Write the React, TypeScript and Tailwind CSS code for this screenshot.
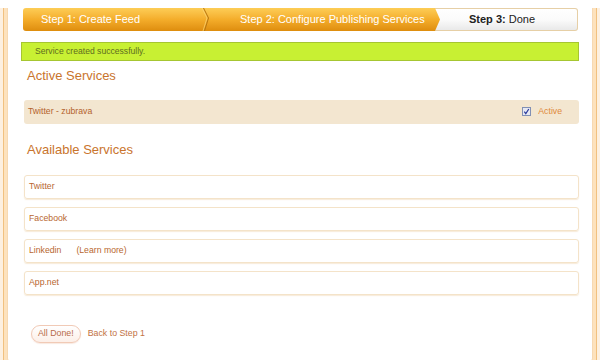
import { ReactNode } from 'react'

const font = "font-['Liberation_Sans',Arial,sans-serif]"

function Chevron() {
  return (
    <svg className="absolute left-[177px] top-0" width="10" height="23" viewBox="0 0 10 23">
      <path d="M2 0 L7 10 L3 23" fill="none" stroke="#fbd77a" strokeWidth="1" opacity="0.7" />
      <path d="M3.5 0 L8.5 10 L4.5 23" fill="none" stroke="#b87610" strokeWidth="1" />
    </svg>
  )
}

function StepBar() {
  return (
    <div className="flex h-[23px] ml-[15px] mr-[14px] mt-[8px] text-[11px]">
      <div className="relative flex items-center w-[412px] rounded-l-[3px] bg-linear-to-b from-[#fdcd55] via-[#f4ad2a] to-[#de8d0c] text-white">
        <span className="pl-[18px] w-[181px]">Step 1: Create Feed</span>
        <Chevron />
        <span className="pl-[36px]">Step 2: Configure Publishing Services</span>
      </div>
      <div className="relative flex-1 flex items-center rounded-r-[3px] border border-l-0 border-[#e6cfa6] bg-linear-to-b from-white via-[#fbfbfb] to-[#e9e9e9] text-[#222]">
        <svg className="absolute left-0 top-[-1px]" width="6" height="23" viewBox="0 0 6 23">
          <defs>
            <linearGradient id="og" x1="0" y1="0" x2="0" y2="1">
              <stop offset="0" stopColor="#fdcd55" />
              <stop offset="0.5" stopColor="#f4ad2a" />
              <stop offset="1" stopColor="#de8d0c" />
            </linearGradient>
          </defs>
          <path d="M0 0 L5 11.5 L0 23 Z" fill="url(#og)" />
        </svg>
        <span className="pl-[34px]">
          <b>Step 3:</b> Done
        </span>
      </div>
    </div>
  )
}

function Row({ children, active }: { children: ReactNode; active?: boolean }) {
  return (
    <div
      className={
        active
          ? 'flex items-center h-[24px] rounded-[3px] bg-[#f3e6d0] px-[4px] text-[8.7px] text-[#b4632c]'
          : 'flex items-center h-[24px] rounded-[3px] border border-[#f4e3c9] shadow-[0_1px_1px_rgba(240,215,180,0.5)] px-[4px] text-[8.7px] text-[#b8672f]'
      }
    >
      {children}
    </div>
  )
}

function CheckBox() {
  return (
    <svg width="9" height="9" viewBox="0 0 9 9">
      <rect x="0.5" y="0.5" width="8" height="8" fill="#e6e8f2" stroke="#8190b4" />
      <path d="M2.3 4.6 L3.8 6.6 L6.8 2" fill="none" stroke="#2c3c9c" strokeWidth="1.2" />
    </svg>
  )
}

export default function App() {
  return (
    <div className={`h-[360px] w-[600px] bg-[#fdf0e0] ${font}`}>
      <div className="mx-[3px] h-[358px] rounded-b-[6px] border-x border-b border-[#f1c17f] bg-[#fde2bd] px-[3px] pb-[3px]">
        <div className="h-full rounded-b-[4px] border-x border-b border-[#f7d9b2] bg-white">
          <StepBar />

          <div className="mt-[11px] mx-[13px] h-[19px] flex items-center border border-[#a6c631] bg-[#c8f033] pl-[13px] text-[8.6px] text-[#5e6d1f]">
            Service created successfully.
          </div>

          <div className="ml-[16px] mr-[13px]">
            <h2 className="mt-[7px] pl-[3px] text-[13px] leading-[15px] text-[#c9742d]">Active Services</h2>
            <div className="mt-[17px]">
              <Row active>
                <span className="flex-1">Twitter - zubrava</span>
                <span className="flex items-center gap-[7px] pr-[13px] text-[#e0893b]">
                  <CheckBox />
                  Active
                </span>
              </Row>
            </div>

            <h2 className="mt-[18px] pl-[3px] text-[13px] leading-[15px] text-[#c9742d]">Available Services</h2>
            <div className="mt-[18px] flex flex-col gap-[8px]">
              <Row>Twitter</Row>
              <Row>Facebook</Row>
              <Row>
                Linkedin <span className="ml-[15px]">(Learn more)</span>
              </Row>
              <Row>App.net</Row>
            </div>

            <div className="mt-[30px] flex items-center gap-[7px] pl-[7px] text-[8.8px]">
              <button className="h-[18px] px-[6px] rounded-full border border-[#f1cab6] bg-linear-to-b from-white to-[#fcefe8] text-[#b86a4a] shadow-[0_1px_1px_rgba(240,200,180,0.4)]">
                All Done!
              </button>
              <a className="text-[#c27244]" href="#">
                Back to Step 1
              </a>
            </div>
          </div>
        </div>
      </div>
    </div>
  )
}
